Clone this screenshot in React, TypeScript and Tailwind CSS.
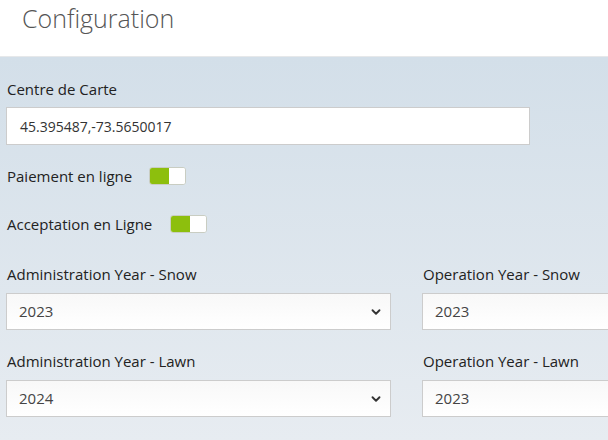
import { ChevronDown } from "lucide-react";

function Toggle() {
  return (
    <span className="inline-flex h-[18px] w-[37px] overflow-hidden rounded-[3px] border border-[#c9cdc2] bg-white">
      <span className="h-full w-[19px] bg-[#8dbf0d]" />
      <span className="h-full flex-1 bg-white" />
    </span>
  );
}

function YearSelect({ label, value, chevron }: { label: string; value: string; chevron?: boolean }) {
  return (
    <div className="flex flex-col">
      <label className="h-5 pl-[1px] text-[15px] font-medium leading-5 text-[#222]">{label}</label>
      <div className="mt-[9px] flex h-[37px] w-[385px] items-center justify-between border border-[#cccccc] bg-gradient-to-b from-[#f8f8f8] to-white pl-[12px] pr-[7px] text-[15px] text-[#444]">
        <span>{value}</span>
        {chevron && <ChevronDown size={14} strokeWidth={3.2} className="text-[#333]" />}
      </div>
    </div>
  );
}

export default function App() {
  return (
    <div
      className="h-[440px] w-[608px] overflow-hidden bg-white"
      style={{ fontFamily: '"Open Sans", "Liberation Sans", sans-serif' }}
    >
      {/* Header */}
      <header className="h-[57px] border-b border-[#e6e8ea] bg-white pl-[22px]">
        <h1 className="pt-[2px] text-[25px] font-light leading-[32px] text-[#555]">Configuration</h1>
      </header>

      {/* Form body */}
      <main className="h-[383px] bg-gradient-to-b from-[#d3dfe9] to-[#e7ecf1] px-[6px] pt-[22px]">
        <label className="block h-5 pl-[1px] text-[15px] font-medium leading-5 text-[#222]">Centre de Carte</label>
        <div className="mt-[8px] flex h-[38px] w-[524px] items-center border border-[#cccccc] bg-white pl-[13px] text-[14px] text-[#333]">
          45.395487,-73.5650017
        </div>

        <div className="mt-[21px] flex h-5 items-center gap-[17px] pl-[1px]">
          <span className="text-[15px] font-medium text-[#222]">Paiement en ligne</span>
          <Toggle />
        </div>
        <div className="mt-[28px] flex h-5 items-center gap-[18px] pl-[1px]">
          <span className="text-[15px] font-medium text-[#222]">Acceptation en Ligne</span>
          <Toggle />
        </div>

        <div className="mt-[30px] grid grid-cols-[385px_385px] gap-x-[31px] gap-y-[21px]">
          <YearSelect label="Administration Year - Snow" value="2023" chevron />
          <YearSelect label="Operation Year - Snow" value="2023" chevron />
          <YearSelect label="Administration Year - Lawn" value="2024" chevron />
          <YearSelect label="Operation Year - Lawn" value="2023" chevron />
        </div>
      </main>
    </div>
  );
}
